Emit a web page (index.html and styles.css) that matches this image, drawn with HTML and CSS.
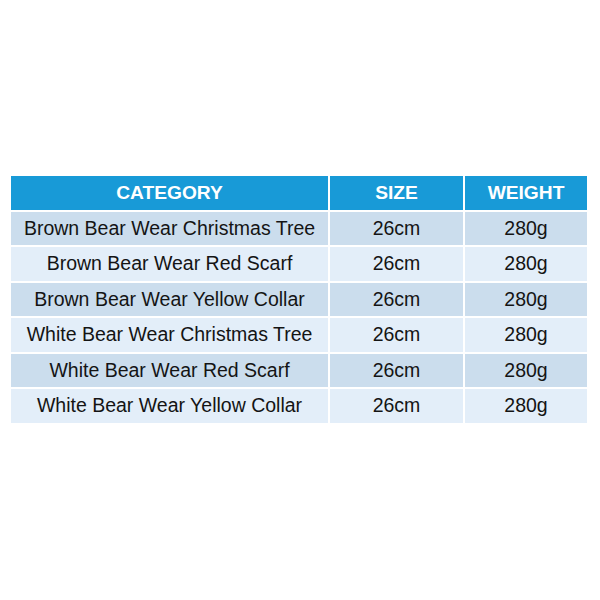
FILE: index.html
```html
<!DOCTYPE html>
<html>
<head>
<meta charset="utf-8">
<link rel="stylesheet" href="styles.css">
</head>
<body>
<div class="page">
  <div class="table">
    <div class="cell head">CATEGORY</div>
    <div class="cell head">SIZE</div>
    <div class="cell head">WEIGHT</div>

    <div class="cell dark">Brown Bear Wear Christmas Tree</div>
    <div class="cell dark">26cm</div>
    <div class="cell dark">280g</div>

    <div class="cell light">Brown Bear Wear Red Scarf</div>
    <div class="cell light">26cm</div>
    <div class="cell light">280g</div>

    <div class="cell dark">Brown Bear Wear Yellow Collar</div>
    <div class="cell dark">26cm</div>
    <div class="cell dark">280g</div>

    <div class="cell light">White Bear Wear Christmas Tree</div>
    <div class="cell light">26cm</div>
    <div class="cell light">280g</div>

    <div class="cell dark">White Bear Wear Red Scarf</div>
    <div class="cell dark">26cm</div>
    <div class="cell dark">280g</div>

    <div class="cell light">White Bear Wear Yellow Collar</div>
    <div class="cell light">26cm</div>
    <div class="cell light">280g</div>
  </div>
</div>
</body>
</html>
```
FILE: styles.css
```css
html, body {
  margin: 0;
  padding: 0;
  background: #ffffff;
}
.page {
  width: 600px;
  height: 600px;
  padding: 176px 12px 0 11px;
  box-sizing: border-box;
}
.table {
  display: grid;
  grid-template-columns: 317px 133px 122px;
  grid-auto-rows: 33.5px;
  column-gap: 2px;
  row-gap: 2px;
  font-family: "Liberation Sans", Arial, sans-serif;
}
.cell {
  display: flex;
  align-items: center;
  justify-content: center;
  font-size: 19.5px;
  color: #141414;
}
.head {
  background: #189ad7;
  color: #ffffff;
  font-weight: bold;
  font-size: 19.2px;
}
.dark {
  background: #cbdded;
}
.light {
  background: #e3eef9;
}
```
